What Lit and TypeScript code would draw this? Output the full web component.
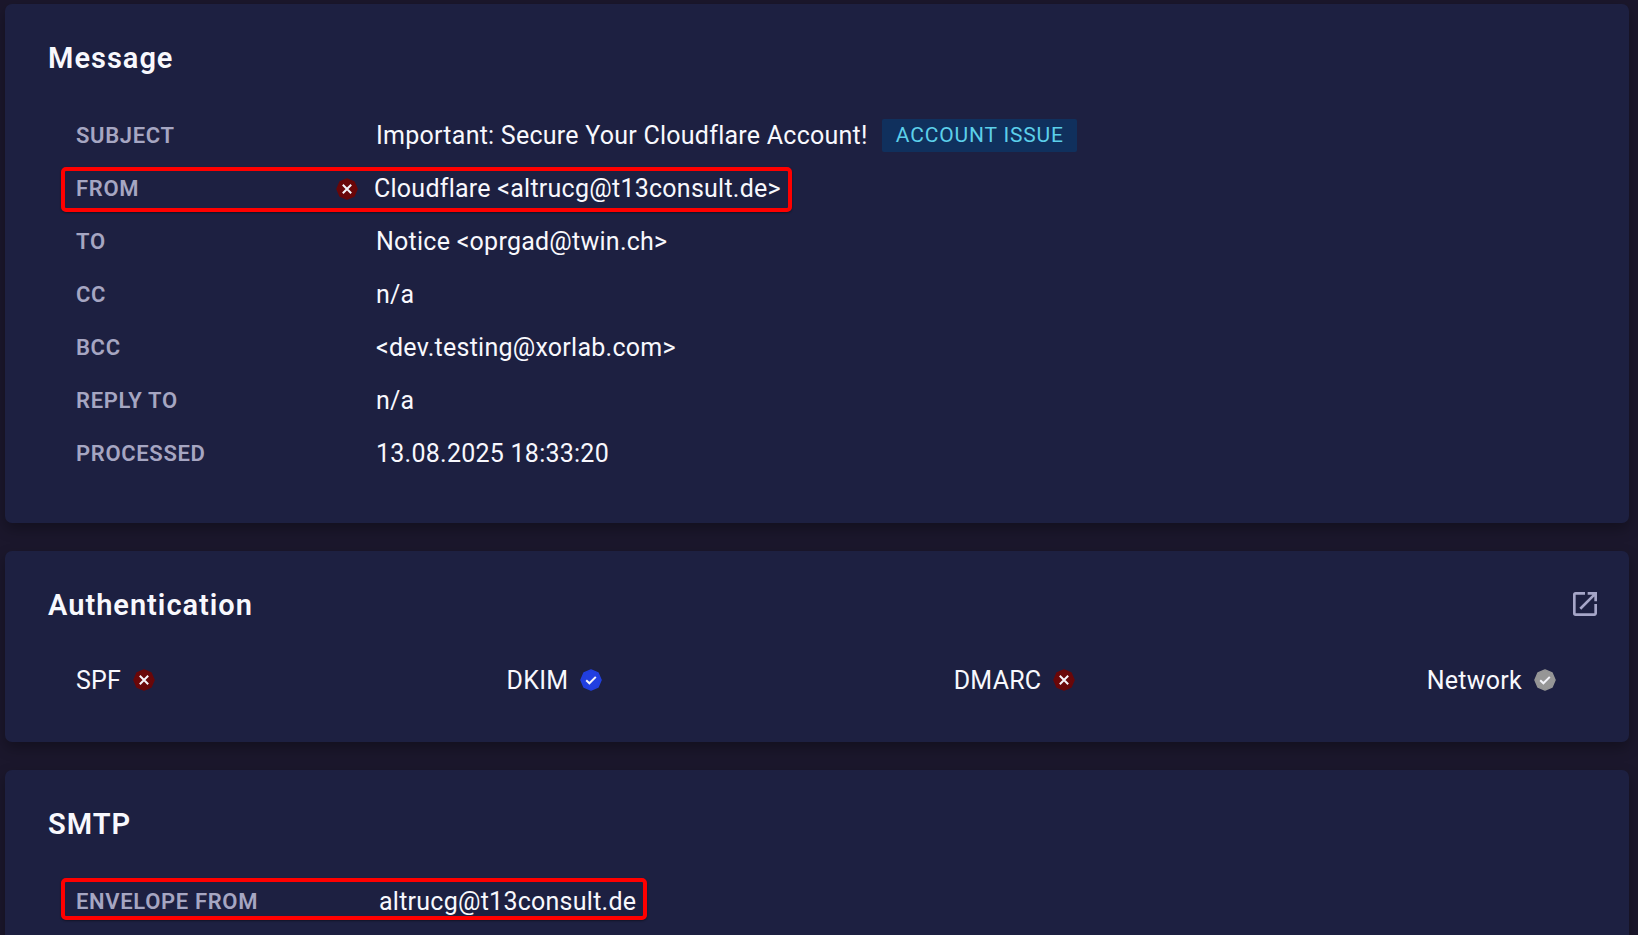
import { LitElement, html, css, nothing } from "lit";
import { customElement, property } from "lit/decorators.js";
import { classMap } from "lit/directives/class-map.js";

type Verdict = "fail" | "pass" | "neutral";

interface Field {
  label: string;
  value: string;
  tag?: string;
  verdict?: Verdict;
  flagged?: boolean;
}

const MESSAGE: Field[] = [
  { label: "Subject", value: "Important: Secure Your Cloudflare Account!", tag: "Account issue" },
  { label: "From", value: "Cloudflare <altrucg@t13consult.de>", verdict: "fail", flagged: true },
  { label: "To", value: "Notice <oprgad@twin.ch>" },
  { label: "CC", value: "n/a" },
  { label: "BCC", value: "<dev.testing@xorlab.com>" },
  { label: "Reply to", value: "n/a" },
  { label: "Processed", value: "13.08.2025 18:33:20" },
];

const SMTP: Field[] = [
  { label: "Envelope from", value: "altrucg@t13consult.de", flagged: true },
];

const CHECKS: { name: string; verdict: Verdict }[] = [
  { name: "SPF", verdict: "fail" },
  { name: "DKIM", verdict: "pass" },
  { name: "DMARC", verdict: "fail" },
  { name: "Network", verdict: "neutral" },
];

@customElement("verdict-badge")
export class VerdictBadge extends LitElement {
  @property() verdict: Verdict = "neutral";

  static styles = css`
    :host { display: block; width: 24px; height: 24px; }
    svg { display: block; width: 24px; height: 24px; }
    .fail { fill: #690709; stroke: #690709; }
    .pass { fill: #213fe0; stroke: #213fe0; }
    .neutral { fill: #969696; stroke: #969696; }
    .mark { fill: none; stroke: #f4f4fa; stroke-width: 2; }
  `;

  render() {
    const mark = this.verdict === "fail" ? "M7.8 7.8l8.4 8.4M16.2 7.8l-8.4 8.4" : "M7.2 12.2l3.2 3.1 6.4-6.4";
    return html`<svg viewBox="0 0 24 24" role="img" aria-label=${this.verdict}>
      <path class=${this.verdict} stroke-linejoin="round" stroke-width="1.4"
        d="M12 1.9L19.1 4.9L22.1 12L19.1 19.1L12 22.1L4.9 19.1L1.9 12L4.9 4.9Z" />
      <path class="mark" d=${mark} />
    </svg>`;
  }
}

@customElement("field-list")
export class FieldList extends LitElement {
  @property({ attribute: false }) fields: Field[] = [];

  static styles = css`
    :host { display: block; padding-bottom: 6px; }
    dl { margin: 0; }
    .row {
      position: relative;
      display: grid;
      grid-template-columns: var(--label-width, 259px) 24px auto;
      align-items: center;
      width: fit-content;
      min-height: 53px;
    }
    .flagged::after {
      content: "";
      position: absolute;
      inset: var(--flag-inset, 5px -11px 3px -15px);
      border: 4px solid #ff0000;
      border-radius: 5px;
      box-shadow: 0 1px 2px #00000066;
      pointer-events: none;
    }
    dt {
      color: #a6a6c2;
      font-size: 22px;
      font-weight: 600;
      line-height: 32px;
      letter-spacing: 0.03em;
      text-transform: uppercase;
    }
    dd {
      grid-column: 3;
      display: flex;
      align-items: center;
      gap: 14px;
      margin: 0 0 0 17px;
      color: #f8f8fd;
      font-size: 25px;
      line-height: 32px;
      letter-spacing: 0.01em;
    }
    .badge { grid-column: 2; }
    .badge + dd { margin-left: 15px; }
    .tag {
      padding: 0 13px 0 14px;
      border-radius: 2px;
      background: #10305d;
      color: #5ccfea;
      font-size: 21px;
      line-height: 33px;
      letter-spacing: 0.04em;
      text-transform: uppercase;
    }
  `;

  render() {
    return html`<dl>
      ${this.fields.map(
        (f) => html`<div class=${classMap({ row: true, flagged: !!f.flagged })}>
          <dt>${f.label}</dt>
          ${f.verdict ? html`<verdict-badge class="badge" .verdict=${f.verdict}></verdict-badge>` : nothing}
          <dd><span>${f.value}</span>${f.tag ? html`<span class="tag">${f.tag}</span>` : nothing}</dd>
        </div>`
      )}
    </dl>`;
  }
}

@customElement("app-root")
export class AppRoot extends LitElement {
  static styles = css`
    :host {
      display: block;
      box-sizing: border-box;
      height: 100vh;
      padding: 4px 9px 0 5px;
      overflow-y: auto;
      scrollbar-width: none;
      background: #1b172c;
      font-family: Roboto, sans-serif;
    }
    main { display: flex; flex-direction: column; gap: 28px; }
    .card {
      padding: 33px 28px 37px 43px;
      border-radius: 7px;
      background: #1d2041;
      box-shadow: 0 6px 14px #0000004d;
    }
    .head {
      display: flex;
      align-items: center;
      justify-content: space-between;
      height: 42px;
      margin-bottom: 30px;
    }
    h2 {
      margin: 0;
      color: #f8f8fd;
      font-size: 29px;
      font-weight: 600;
      line-height: 42px;
      letter-spacing: 1px;
    }
    .open {
      margin-bottom: 2px;
      padding: 0;
      border: 0;
      background: none;
      color: #a6a6c8;
      cursor: pointer;
    }
    .open svg { display: block; width: 32px; height: 32px; fill: currentColor; }
    .fields { margin-left: 28px; }
    .smtp { --label-width: 262px; --flag-inset: 3px -11px 8px -15px; }
    .checks {
      display: flex;
      justify-content: space-between;
      margin: 0 44px 0 28px;
      padding: 0;
      list-style: none;
    }
    .check {
      display: flex;
      align-items: center;
      gap: 11px;
      height: 49px;
      color: #f8f8fd;
      font-size: 25px;
      line-height: 32px;
      letter-spacing: 0.01em;
    }
    .check-badge { margin-bottom: 2px; }
  `;

  render() {
    return html`<main>
      <section class="card">
        <header class="head"><h2>Message</h2></header>
        <field-list class="fields" .fields=${MESSAGE}></field-list>
      </section>
      <section class="card">
        <header class="head">
          <h2>Authentication</h2>
          <button class="open" type="button" aria-label="Open authentication details">
            <svg viewBox="0 0 24 24" aria-hidden="true">
              <path d="M19 19H5V5h7V3H5a2 2 0 0 0-2 2v14a2 2 0 0 0 2 2h14c1.100 0 2-.9 2-2v-7h-2v7zM14 3v2h3.590l-9.830 9.830 1.410 1.410L19 6.410V10h2V3h-7z" />
            </svg>
          </button>
        </header>
        <ul class="checks">
          ${CHECKS.map(
            (c) => html`<li class="check">
              <span>${c.name}</span><verdict-badge class="check-badge" .verdict=${c.verdict}></verdict-badge>
            </li>`
          )}
        </ul>
      </section>
      <section class="card">
        <header class="head"><h2>SMTP</h2></header>
        <field-list class="fields smtp" .fields=${SMTP}></field-list>
      </section>
    </main>`;
  }
}
